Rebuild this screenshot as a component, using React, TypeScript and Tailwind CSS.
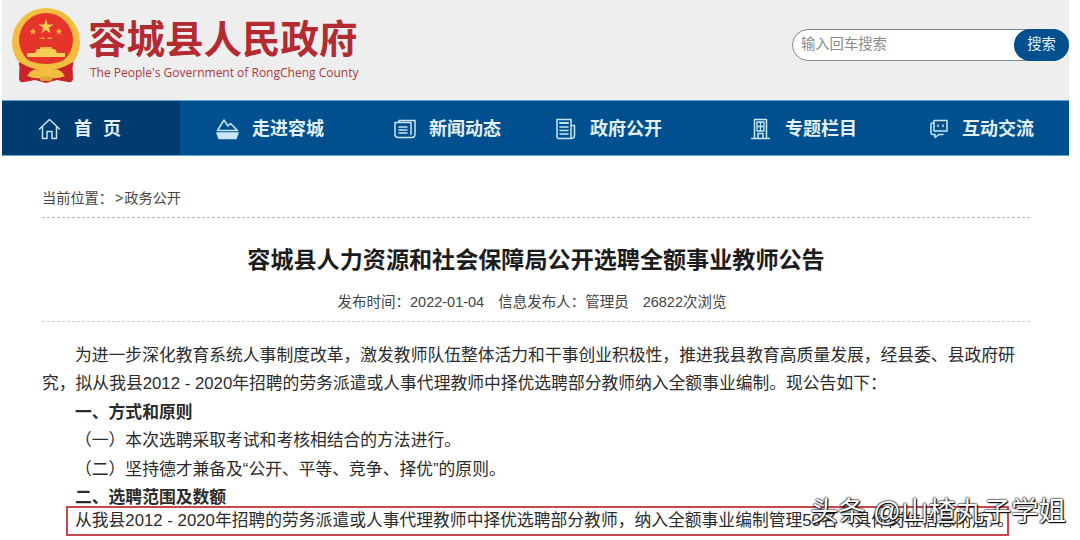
import React from 'react';

const cjk = "font-['Liberation_Sans','Noto_Sans_CJK_SC',sans-serif]";

const Emblem = () => (
  <svg width="70" height="76" viewBox="0 0 70 76" className="shrink-0">
    <path d="M9 48 L8 70 Q8 75 13 74 L24 72 L35 75 L46 72 L57 74 Q62 75 62 70 L61 48 Z" fill="#c8242b" />
    <circle cx="35" cy="34" r="34" fill="#f3bd3f" />
    <circle cx="35" cy="32" r="27" fill="#e5352b" />
    <path d="M8 50 Q35 70 62 50 L62 58 Q35 76 8 58 Z" fill="#c8242b" />
    <path d="M7 47 Q35 65 63 47 L62 54 Q35 71 8 54 Z" fill="#f3bd3f" />
    <path d="M35 11 L36.7 16.5 L42.5 16.5 L37.8 19.8 L39.6 25.3 L35 22 L30.4 25.3 L32.2 19.8 L27.5 16.5 L33.3 16.5 Z" fill="#f7cf55" />
    <path d="M22 20 l1 2.4 2.5 .2 -1.9 1.6 .6 2.4 -2.2 -1.3 -2.2 1.3 .6 -2.4 -1.9 -1.6 2.5 -.2 Z" fill="#f7a840" />
    <path d="M48 20 l1 2.4 2.5 .2 -1.9 1.6 .6 2.4 -2.2 -1.3 -2.2 1.3 .6 -2.4 -1.9 -1.6 2.5 -.2 Z" fill="#f7a840" />
    <path d="M28 31 l4 -2 l2 2 Z M36 31 l2 -2 l4 2 Z" fill="#f7a840" />
    <path d="M26 41 h18 l2 4 h8 v4 H16 v-4 h8 Z" fill="#f7cf55" />
    <path d="M29 39 h12 v2 h-12 Z" fill="#f3bd3f" />
    <path d="M18 49 h34 v2 H18 Z" fill="#e5352b" />
    <path d="M16 68 q6 -9 12 -6 q7 -5 14 0 q6 -3 12 6 q-9 4 -19 1 q-10 3 -19 -1 Z" fill="#f3bd3f" />
    <path d="M28 70 q7 -4 14 0 l-2 3 h-10 Z" fill="#e0a53a" />
  </svg>
);

const stroke = {
  fill: 'none',
  stroke: '#c9e6f5',
  strokeWidth: 1.5,
  strokeLinejoin: 'round' as const,
  strokeLinecap: 'round' as const,
};

const HomeIcon = () => (
  <svg width="23" height="22" viewBox="0 0 23 22" {...stroke}>
    <path d="M1.5 11 L11.5 1.5 L21.5 11 M4.5 9 V20.5 H9 V13.5 H14 V20.5 H18.5 V9" />
  </svg>
);

const MountainIcon = () => (
  <svg width="23" height="22" viewBox="0 0 23 22" {...stroke}>
    <path d="M1.5 12.5 L8 2 L12 8 L14.5 5.5 L21.5 12.5 Z" />
    <path d="M1 15 H22 L20 20.5 H3 Z" fill="#c9e6f5" />
  </svg>
);

const NewsIcon = () => (
  <svg width="22" height="20" viewBox="0 0 22 20" {...stroke}>
    <path d="M5 3.5 V1.5 H21 V15 Q21 18.5 18 18.5 H4 Q1 18.5 1 15.5 V3.5 H17 V15.5" />
    <path d="M5 8 H13 M5 11 H13 M5 14 H13" />
  </svg>
);

const PublicIcon = () => (
  <svg width="20" height="22" viewBox="0 0 20 22" {...stroke}>
    <path d="M15 20.5 H3 Q1 20.5 1 18.5 V1.5 H15 V20.5 Q18.5 20.5 18.5 17.5 V7.5 H15" />
    <path d="M4 9 H12 M4 12.5 H12 M4 16 H12" />
    <path d="M4 5 H12" strokeWidth="2" strokeDasharray="1.5 1" />
  </svg>
);

const BuildingIcon = () => (
  <svg width="19" height="22" viewBox="0 0 19 22" {...stroke}>
    <path d="M3.5 20.5 V1.5 H15.5 V20.5 M0.5 20.5 H18.5 M7 20.5 V15.5 H12 V20.5" />
    <path d="M6 4 H13 V13 H6 Z M9.5 4 V13 M6 8.5 H13" strokeWidth="1.3" />
  </svg>
);

const ChatIcon = () => (
  <svg width="18" height="20" viewBox="0 0 18 20" {...stroke}>
    <path d="M4 4 H2 Q1 4 1 5 V14 Q1 15.5 2.5 15.5 H5 V18.5 L9 15.5 H13" />
    <path d="M4 1.5 H17 V12 H4 Z" />
    <path d="M8 6 V7.5 M13 6 V7.5" />
  </svg>
);

const navItems = [
  { label: '走进容城', icon: <MountainIcon />, width: 'w-[178px]', gap: 'gap-[13px]' },
  { label: '新闻动态', icon: <NewsIcon />, width: 'w-[162px]', gap: 'gap-[13px]' },
  { label: '政府公开', icon: <PublicIcon />, width: 'w-[195px]', gap: 'gap-[14px]' },
  { label: '专题栏目', icon: <BuildingIcon />, width: 'w-[179px]', gap: 'gap-[15px]' },
  { label: '互动交流', icon: <ChatIcon />, width: 'w-[175px]', gap: 'gap-[14px]' },
];

export default function App() {
  return (
    <div className={`${cjk} relative h-[540px] w-[1080px] overflow-hidden bg-white pl-[2px] pr-[11px]`}>
      {/* Site header */}
      <header className="flex h-[100px] items-center justify-between bg-[#eeeeef] pl-[9px]">
        <div className="-mt-[8px] flex items-center gap-[7px]">
          <Emblem />
          <div className="flex flex-col pt-[6px]">
            <span className="text-[38.5px] font-bold leading-[46px] text-[#b32a30]">容城县人民政府</span>
            <span className="mt-[2px] pl-[2px] font-['Open_Sans',sans-serif] text-[12px] leading-[16px] text-[#a93a42]">
              The People's Government of RongCheng County
            </span>
          </div>
        </div>
        <div className="mt-[-11px] flex h-[32px] w-[277px] items-center justify-between rounded-[16px] border border-[#7d8a94] bg-white pl-[8px]">
          <span className="text-[14.3px] text-[#8b8b8b]">输入回车搜索</span>
          <span className="-mr-[1px] flex h-[32px] w-[55px] items-center justify-center rounded-[16px] bg-[#00508f] text-[14.3px] text-[#e8f2f8]">
            搜索
          </span>
        </div>
      </header>

      {/* Main nav */}
      <nav className="flex h-[56px] border-y border-[#5aa6cf] bg-[#00508f] pt-[1px] text-[18px] font-bold text-[#e3f0f7]">
        <div className="-mt-[1px] flex w-[178px] items-center gap-[13px] bg-[#003c70] pl-[36px] pt-[1px]">
          <HomeIcon />
          <span className="pt-[2px] tracking-[11px]">首页</span>
        </div>
        {navItems.map((item) => (
          <div key={item.label} className={`flex ${item.width} items-center ${item.gap} pl-[36px]`}>
            {item.icon}
            <span className="pt-[2px]">{item.label}</span>
          </div>
        ))}
      </nav>

      {/* Article */}
      <main className="pl-[40px] pr-[39px]">
        <div className="flex h-[62px] items-end border-b border-dashed border-[#b5b5b5] pb-[10px] text-[14.2px] leading-[18px] text-[#444]">
          当前位置：<span className="ml-[2px]">&gt;</span>
          <span className="ml-[1px]">政务公开</span>
        </div>
        <h1 className="mt-[26px] text-center text-[23.1px] font-bold leading-[32px] text-[#1c1c1c]">
          容城县人力资源和社会保障局公开选聘全额事业教师公告
        </h1>
        <div className="mt-[15px] flex h-[31px] justify-center gap-[14px] border-b border-dashed border-[#cfcfcf] pr-[8px] text-[14.5px] leading-[22px] text-[#444]">
          <span>发布时间：2022-01-04</span>
          <span>信息发布人：管理员</span>
          <span>26822次浏览</span>
        </div>
        <div className="mt-[20px] text-[16.8px] leading-[28.4px] text-[#2b2b2b]">
          <p className="indent-[33px]">
            为进一步深化教育系统人事制度改革，激发教师队伍整体活力和干事创业积极性，推进我县教育高质量发展，经县委、县政府研究，拟从我县2012 - 2020年招聘的劳务派遣或人事代理教师中择优选聘部分教师纳入全额事业编制。现公告如下：
          </p>
          <p className="pl-[33px] font-bold">一、方式和原则</p>
          <p className="pl-[33px]">（一）本次选聘采取考试和考核相结合的方法进行。</p>
          <p className="pl-[33px]">（二）坚持德才兼备及“公开、平等、竞争、择优”的原则。</p>
          <p className="pl-[33px] font-bold">二、选聘范围及数额</p>
          <p className="ml-[24px] mr-[21px] mt-[-6px] h-[30px] border-2 border-[#c8474c] pl-[7px] leading-[26px] whitespace-nowrap">
            从我县2012 - 2020年招聘的劳务派遣或人事代理教师中择优选聘部分教师，纳入全额事业编制管理50名（具体岗位信息附后）。
          </p>
        </div>
      </main>

      {/* Watermark */}
      <div className="absolute right-[14px] top-[493px] text-[27.5px] leading-[38px] text-white [text-shadow:0_0_2px_#000,0_0_2px_#000,1px_1px_1px_#000]">
        头条 @山楂丸子学姐
      </div>
    </div>
  );
}
